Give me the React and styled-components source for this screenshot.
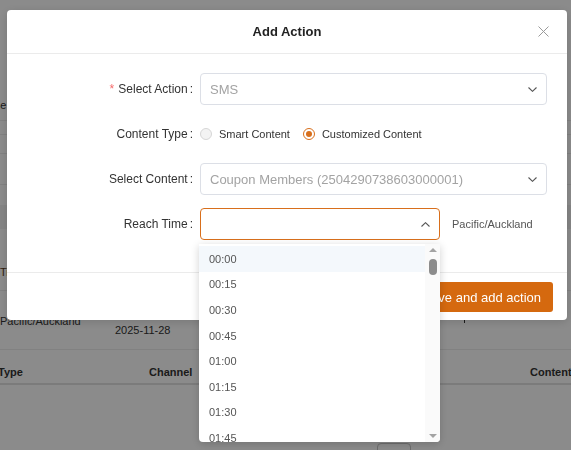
import styled, { createGlobalStyle } from "styled-components"

const GlobalStyle = createGlobalStyle`
    html, body {
        margin:0;
        padding:0;
    }
    body {
        font-family:"Liberation Sans", Arial, sans-serif;
        background:#fff;
        width:571px;
        height:450px;
        overflow:hidden;
    }
`

const times = ["00:00", "00:15", "00:30", "00:45", "01:00", "01:15", "01:30", "01:45", "02:00"]

const Chevron = ({ up }) => (
    <svg width="9" height="5" viewBox="0 0 9 5">
        <polyline
            points={up ? "0.5,4.5 4.5,0.7 8.5,4.5" : "0.5,0.5 4.5,4.3 8.5,0.5"}
            fill="none"
            stroke="#555"
            strokeWidth="1.1"
        />
    </svg>
)

const App = () => {
    return (
        <>
            <GlobalStyle />
            <Page>
                <BgRow h={90} />
                <BgRow h={31} line>
                    <BgCell w={40} pt={9} shift={-7}>Se</BgCell>
                </BgRow>
                <BgRow h={14} line />
                <BgRow h={19} line />
                <BgRow h={31} line />
                <BgRow h={20} />
                <BgRow h={24} shade />
                <BgRow h={62} line>
                    <BgCell w={60} pt={37} accent>Time</BgCell>
                </BgRow>
                <BgRow h={59} line>
                    <BgCell w={115} pt={24}>Pacific/Auckland</BgCell>
                    <BgCell w={349} pt={33}>2025-11-28</BgCell>
                    <BgBar />
                </BgRow>
                <BgRow h={35} thick>
                    <BgCell w={151} pt={16} bold shift={-2}>Type</BgCell>
                    <BgCell w={381} pt={16} bold>Channel</BgCell>
                    <BgCell w={60} pt={16} bold>Content</BgCell>
                </BgRow>
                <BgRow h={65}>
                    <EmptyIcon />
                </BgRow>
            </Page>

            <Overlay>
                <Modal>
                    <Header>
                        <Title>Add Action</Title>
                        <Close>
                            <svg width="11" height="11" viewBox="0 0 11 11">
                                <path d="M0.5 0.5 L10.5 10.5 M10.5 0.5 L0.5 10.5" stroke="#9a9a9a" strokeWidth="1" />
                            </svg>
                        </Close>
                    </Header>

                    <Body>
                        <Label><Star>*</Star>Select Action<Colon>:</Colon></Label>
                        <Control>
                            <Select>
                                <Value>SMS</Value>
                                <Chevron />
                            </Select>
                        </Control>

                        <Label>Content Type<Colon>:</Colon></Label>
                        <Control>
                            <RadioItem>
                                <Radio />
                                Smart Content
                            </RadioItem>
                            <RadioItem>
                                <Radio checked />
                                Customized Content
                            </RadioItem>
                        </Control>

                        <Label>Select Content<Colon>:</Colon></Label>
                        <Control>
                            <Select>
                                <Value>Coupon Members (2504290738603000001)</Value>
                                <Chevron />
                            </Select>
                        </Control>

                        <Label>Reach Time<Colon>:</Colon></Label>
                        <Control>
                            <TimeWrap>
                                <Select active>
                                    <Value />
                                    <Chevron up />
                                </Select>
                                <Dropdown>
                                    <Options>
                                        {times.map((t, i) => (
                                            <Option key={t} hovered={i === 0}>{t}</Option>
                                        ))}
                                    </Options>
                                    <Scrollbar>
                                        <ScrollArrow />
                                        <Thumb />
                                        <ScrollSpace />
                                        <ScrollArrow down />
                                    </Scrollbar>
                                </Dropdown>
                            </TimeWrap>
                            <Zone>Pacific/Auckland</Zone>
                        </Control>
                    </Body>

                    <Footer>
                        <PrimaryButton>Save and add action</PrimaryButton>
                    </Footer>
                </Modal>
            </Overlay>
        </>
    )
}

const Page = styled.div`
    width:571px;
    height:450px;
    overflow:hidden;
    color:#333;
    font-size:11px;
`

const BgRow = styled.div`
    height:${(p) => p.h}px;
    box-sizing:border-box;
    display:flex;
    position:relative;
    background:${(p) => (p.shade ? "#f3f3f3" : "transparent")};
    border-bottom:${(p) => (p.thick ? "2px solid #e2e2e2" : p.line ? "1px solid #ececec" : "none")};
`

const BgCell = styled.div`
    width:${(p) => p.w}px;
    flex-shrink:0;
    padding-top:${(p) => p.pt}px;
    margin-left:${(p) => p.shift || 0}px;
    font-weight:${(p) => (p.bold ? "bold" : "normal")};
    color:${(p) => (p.accent ? "#5a3a1a" : "#333")};
    white-space:nowrap;
`

const BgBar = styled.div`
    width:1px;
    height:7px;
    margin-top:25px;
    background:#333;
`

const EmptyIcon = styled.div`
    position:absolute;
    left:377px;
    top:58px;
    width:34px;
    height:20px;
    box-sizing:border-box;
    border:1px solid #c8c8c8;
    border-radius:4px;
`

const Overlay = styled.div`
    position:fixed;
    inset:0;
    background:rgba(0,0,0,0.455);
    padding:10px 0 0 7px;
`

const Modal = styled.div`
    width:560px;
    background:#fff;
    border-radius:4px;
    box-shadow:0 2px 10px rgba(0,0,0,0.15);
    color:#333;
`

const Header = styled.div`
    height:43px;
    position:relative;
    display:flex;
    align-items:center;
    justify-content:center;
    border-bottom:1px solid #ebebeb;
`

const Title = styled.h2`
    margin:0;
    font-size:13px;
    font-weight:bold;
    color:#222;
`

const Close = styled.span`
    position:absolute;
    right:18px;
    top:16px;
    display:flex;
`

const Body = styled.div`
    display:grid;
    grid-template-columns:186px 1fr;
    grid-auto-rows:32px;
    column-gap:7px;
    row-gap:13px;
    padding:19px 20px 32px 0;
`

const Label = styled.div`
    display:flex;
    align-items:center;
    justify-content:flex-end;
    font-size:12px;
    color:#333;
    white-space:nowrap;
`

const Star = styled.span`
    color:#f56c6c;
    margin-right:4px;
    font-size:12px;
`

const Colon = styled.span`
    margin-left:2px;
`

const Control = styled.div`
    display:flex;
    align-items:center;
    min-width:0;
`

const Select = styled.div`
    flex:1;
    height:32px;
    box-sizing:border-box;
    border:1px solid ${(p) => (p.active ? "#d86f1c" : "#dcdfe6")};
    border-radius:4px;
    background:#fff;
    display:flex;
    align-items:center;
    padding:0 9px 0 9px;
    gap:8px;
`

const Value = styled.span`
    flex:1;
    font-size:13px;
    color:#a3a3a3;
    white-space:nowrap;
    overflow:hidden;
`

const RadioItem = styled.label`
    display:flex;
    align-items:center;
    gap:7px;
    font-size:11px;
    color:#333;
    margin-right:13px;
`

const Radio = styled.span`
    width:12px;
    height:12px;
    box-sizing:border-box;
    border-radius:50%;
    border:1px solid ${(p) => (p.checked ? "#d86f1c" : "#d6d6d6")};
    background:${(p) => (p.checked ? "#fff" : "#f3f3f3")};
    display:flex;
    align-items:center;
    justify-content:center;
    &::after {
        content:"";
        width:6px;
        height:6px;
        border-radius:50%;
        background:#d86f1c;
        display:${(p) => (p.checked ? "block" : "none")};
    }
`

const TimeWrap = styled.div`
    width:240px;
    display:flex;
    position:relative;
`

const Zone = styled.span`
    margin-left:12px;
    font-size:11px;
    color:#555;
    white-space:nowrap;
`

const Dropdown = styled.div`
    position:absolute;
    z-index:10;
    left:-1px;
    top:36px;
    width:241px;
    height:198px;
    background:#fff;
    border-radius:0 0 4px 4px;
    box-shadow:0 2px 8px rgba(0,0,0,0.18);
    display:flex;
    overflow:hidden;
`

const Options = styled.ul`
    flex:1;
    list-style:none;
    margin:0;
    padding:2px 0 0;
    overflow:hidden;
`

const Option = styled.li`
    height:25.6px;
    display:flex;
    align-items:center;
    padding-left:10px;
    font-size:11px;
    color:#555;
    background:${(p) => (p.hovered ? "#f4f8fc" : "transparent")};
`

const Scrollbar = styled.div`
    width:15px;
    background:#fafafa;
    display:flex;
    flex-direction:column;
    align-items:center;
    padding:4px 0;
    box-sizing:border-box;
`

const ScrollArrow = styled.span`
    width:0;
    height:0;
    border-left:4px solid transparent;
    border-right:4px solid transparent;
    ${(p) => (p.down ? "border-top:4px solid #a3a3a3;" : "border-bottom:4px solid #a3a3a3;")}
`

const Thumb = styled.span`
    width:8px;
    height:16px;
    border-radius:4px;
    background:#8c8c8c;
    margin-top:7px;
`

const ScrollSpace = styled.span`
    flex:1;
`

const Footer = styled.div`
    border-top:1px solid #ebebeb;
    padding:9px 14px 8px;
    display:flex;
    justify-content:flex-end;
`

const PrimaryButton = styled.button`
    height:30px;
    border:none;
    border-radius:3px;
    background:#d5690f;
    color:#fff;
    font-family:inherit;
    font-size:13px;
    padding:0 12px;
    cursor:pointer;
`

export default App
